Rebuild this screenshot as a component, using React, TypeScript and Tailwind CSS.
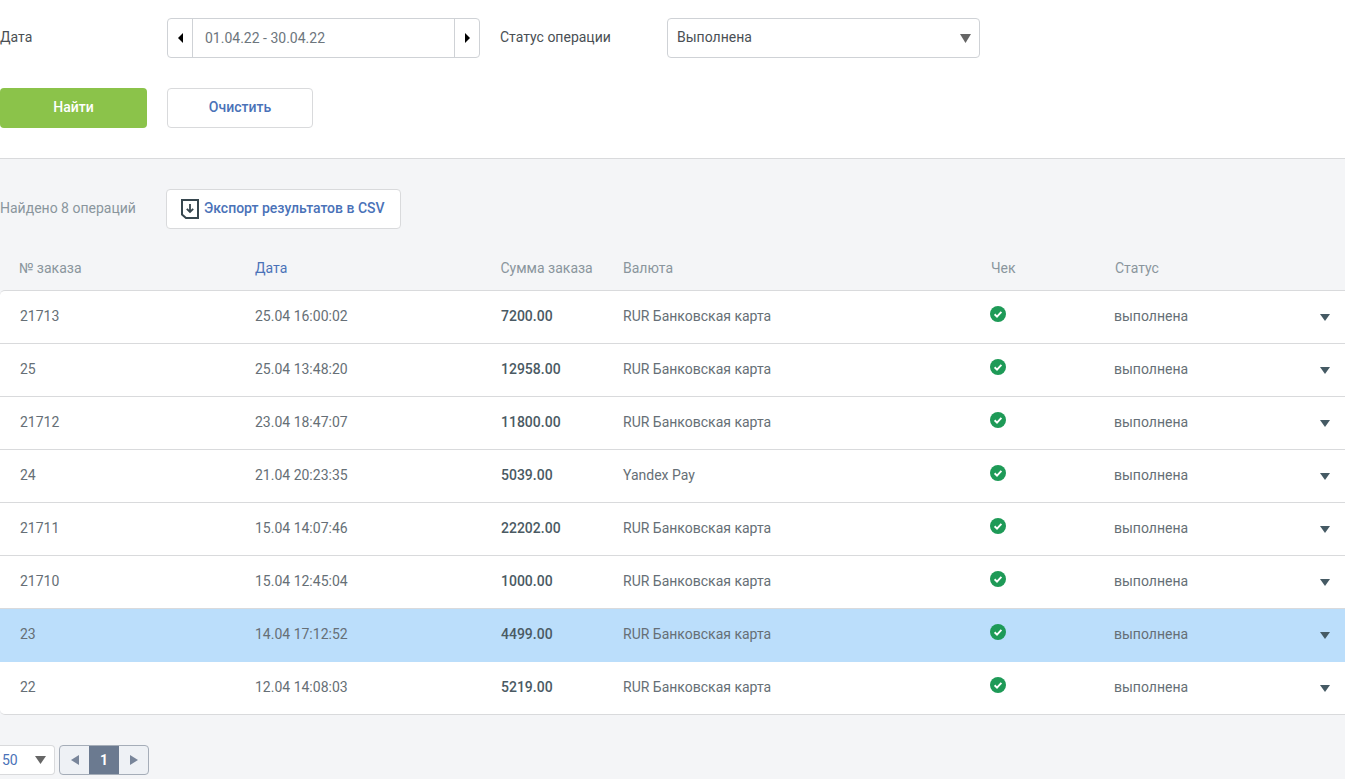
const rows = [
  { id: '21713', date: '25.04 16:00:02', sum: '7200.00', pay: 'RUR Банковская карта' },
  { id: '25', date: '25.04 13:48:20', sum: '12958.00', pay: 'RUR Банковская карта' },
  { id: '21712', date: '23.04 18:47:07', sum: '11800.00', pay: 'RUR Банковская карта' },
  { id: '24', date: '21.04 20:23:35', sum: '5039.00', pay: 'Yandex Pay' },
  { id: '21711', date: '15.04 14:07:46', sum: '22202.00', pay: 'RUR Банковская карта' },
  { id: '21710', date: '15.04 12:45:04', sum: '1000.00', pay: 'RUR Банковская карта' },
  { id: '23', date: '14.04 17:12:52', sum: '4499.00', pay: 'RUR Банковская карта', active: true },
  { id: '22', date: '12.04 14:08:03', sum: '5219.00', pay: 'RUR Банковская карта' },
];

function Tri({ dir, className }: { dir: 'left' | 'right' | 'down'; className: string }) {
  const points = dir === 'left' ? '10,0 10,10 0,5' : dir === 'right' ? '0,0 0,10 10,5' : '0,0 10,0 5,10';
  return (
    <svg viewBox="0 0 10 10" preserveAspectRatio="none" className={className} fill="currentColor">
      <polygon points={points} />
    </svg>
  );
}

function CheckBadge() {
  return (
    <svg viewBox="0 0 16 16" className="w-4 h-4 block">
      <circle cx="8" cy="8" r="8" fill="#1e9a57" />
      <path d="M4.6 8.3 7 10.6 11.4 5.9" fill="none" stroke="#fff" strokeWidth="1.9" />
    </svg>
  );
}

function ExportIcon() {
  return (
    <svg viewBox="0 0 18 20" className="w-[18px] h-[20px] text-[#37474f]" fill="none" stroke="currentColor">
      <path d="M1 1h16v18H5l-4-3.5z" strokeWidth="2" strokeLinejoin="miter" />
      <path d="M9 5v8M5.8 9.8 9 13l3.2-3.2" strokeWidth="1.8" />
    </svg>
  );
}

export default function App() {
  return (
    <div className="h-screen overflow-hidden bg-[#f4f5f7] font-['Roboto',sans-serif] text-sm text-[#666f76]">
      {/* filters */}
      <div className="h-[159px] bg-white border-b border-[#d9dadc]">
        <div className="flex items-center pt-[18px]">
          <div className="w-[167px] pb-[2px] text-[#4a4f54]">Дата</div>
          <div className="flex w-[313px] h-10 rounded border border-[#cfd2d6]">
            <div className="flex w-[25px] items-center justify-center border-r border-[#cfd2d6]">
              <Tri dir="left" className="w-[5px] h-[10px] text-black" />
            </div>
            <div className="flex-1 pl-3 flex items-center text-[#6d767d]">01.04.22 - 30.04.22</div>
            <div className="flex w-[25px] items-center justify-center border-l border-[#cfd2d6]">
              <Tri dir="right" className="w-[5px] h-[10px] text-black" />
            </div>
          </div>
          <div className="w-[187px] pl-5 pb-[2px] text-[#4a4f54]">Статус операции</div>
          <div className="flex w-[313px] h-10 items-center justify-between rounded border border-[#cfd2d6] pl-[9px] pr-[8px] text-[#4a4f54]">
            <span className="pb-[2px]">Выполнена</span>
            <Tri dir="down" className="w-[11px] h-[9px] text-[#666]" />
          </div>
        </div>
        <div className="flex mt-[30px]">
          <button className="w-[147px] h-10 pb-[2px] rounded bg-[#8bc34a] text-white font-medium">Найти</button>
          <button className="ml-5 w-[146px] h-10 pb-[2px] rounded border border-[#d9dadc] bg-white text-[#4a72b8] font-medium">Очистить</button>
        </div>
      </div>

      {/* results */}
      <div className="flex items-center mt-[30px]">
        <div className="w-[166px] pb-[2px] text-[#8a959d]">Найдено 8 операций</div>
        <button className="flex items-center gap-[5px] w-[235px] h-10 pl-[14px] rounded border border-[#d9dadc] bg-white text-[#4a72b8] font-medium">
          <ExportIcon />
          <span className="pb-[2px]">Экспорт результатов в CSV</span>
        </button>
      </div>

      <div className="grid grid-cols-[236px_245.5px_122.5px_368px_124px_1fr] items-center h-[61px] pl-[19px] pt-[17px] text-[#8a959d]">
        <div>№ заказа</div>
        <div className="text-[#4a72b8]">Дата</div>
        <div>Сумма заказа</div>
        <div>Валюта</div>
        <div>Чек</div>
        <div>Статус</div>
      </div>

      <div className="bg-white border-y border-[#d9dadc] rounded-l-[5px]">
        {rows.map((r) => (
          <div
            key={r.id}
            className={`grid grid-cols-[235px_246px_122px_368px_124px_1fr] items-center h-[53px] last:h-[52px] pl-5 pb-[3px] last:pb-[2px] border-b last:border-b-0 ${r.active ? 'bg-[#bbdefb] border-[#bbdefb]' : 'border-[#d9dadc]'}`}
          >
            <div>{r.id}</div>
            <div>{r.date}</div>
            <div className="font-medium text-[#4a5a63]">{r.sum}</div>
            <div>{r.pay}</div>
            <div className="-mt-1 -ml-px"><CheckBadge /></div>
            <div className="flex items-center justify-between pr-[15px]">
              <span className="-ml-px">выполнена</span>
              <Tri dir="down" className="w-[10px] h-[7px] mt-[3px] text-[#455a64]" />
            </div>
          </div>
        ))}
      </div>

      {/* pagination */}
      <div className="flex items-center mt-[30px]">
        <div className="flex w-[55px] h-[30px] items-center justify-between pl-[2px] pr-[8px] rounded-r border-y border-r border-[#d9dadc] bg-white text-[#4a72b8]">
          <span>50</span>
          <Tri dir="down" className="w-[11px] h-[8px] text-[#666]" />
        </div>
        <div className="ml-1 flex h-[30px] w-[90px] rounded border border-[#a5adb8] bg-[#eef1f5] overflow-hidden">
          <div className="flex w-[29px] items-center justify-center"><Tri dir="left" className="w-[8px] h-[10px] text-[#78859a]" /></div>
          <div className="flex w-[30px] items-center justify-center bg-[#6b7a90] text-white font-bold">1</div>
          <div className="flex w-[29px] items-center justify-center"><Tri dir="right" className="w-[8px] h-[10px] text-[#78859a]" /></div>
        </div>
      </div>
    </div>
  );
}
